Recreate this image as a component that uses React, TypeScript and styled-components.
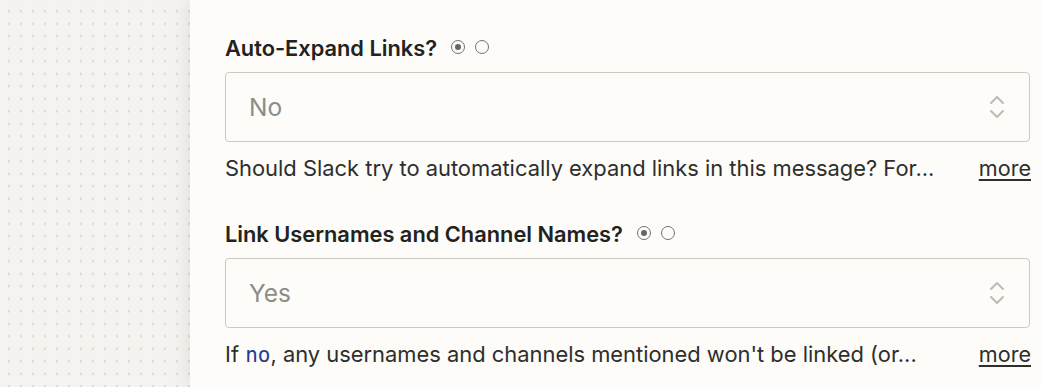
import React from "react";
import styled, { createGlobalStyle } from "styled-components";

const GlobalStyle = createGlobalStyle`
  html, body {
    margin: 0;
    padding: 0;
    height: 100%;
    overflow: hidden;
  }
  body {
    font-family: Inter, "Noto Sans", "Liberation Sans", sans-serif;
    background: #f4f3f0;
  }
`;

const Page = styled.div`
  display: flex;
  width: 1041px;
  height: 387px;
  overflow: hidden;
`;

const Canvas = styled.div`
  width: 190px;
  flex-shrink: 0;
  background-color: #f4f3f0;
  background-image: radial-gradient(circle, #d9d7d2 1px, transparent 1.2px);
  background-size: 12px 12.5px;
  background-position: 3px 5px;
`;

const Panel = styled.div`
  flex: 1;
  background: #fdfcf8;
  box-shadow: -6px 0 14px rgba(0, 0, 0, 0.06);
  padding: 34px 11px 0 35px;
  display: flex;
  flex-direction: column;
  gap: 38px;
`;

const Field = styled.div`
  display: flex;
  flex-direction: column;
`;

const LabelRow = styled.div`
  display: flex;
  align-items: center;
  gap: 14px;
  height: 28px;
  margin-bottom: 10px;
`;

const Label = styled.span`
  font-size: 21.8px;
  font-weight: 600;
  color: #222221;
`;

const Radios = styled.span`
  display: flex;
  align-items: center;
  gap: 10px;
  margin-top: -2px;
`;

const Radio = styled.span<{ $on?: boolean }>`
  width: 14px;
  height: 14px;
  border-radius: 50%;
  border: 1.5px solid #737270;
  box-sizing: border-box;
  display: flex;
  align-items: center;
  justify-content: center;
  &::after {
    content: "";
    width: 6px;
    height: 6px;
    border-radius: 50%;
    background: ${(p) => (p.$on ? "#666563" : "transparent")};
  }
`;

const Select = styled.div`
  height: 70px;
  box-sizing: border-box;
  border: 1px solid #cbc9c4;
  border-radius: 4px;
  background: #fdfcf8;
  display: flex;
  align-items: center;
  justify-content: space-between;
  padding: 0 24px 0 23px;
`;

const Value = styled.span`
  font-size: 24.5px;
  color: #8d8c8a;
`;

const Help = styled.div`
  display: flex;
  align-items: center;
  justify-content: space-between;
  margin-top: 12px;
  height: 28px;
`;

const HelpText = styled.span`
  font-size: 21.9px;
  color: #2e2e2d;
  white-space: nowrap;
`;

const Code = styled.code`
  font-family: "DejaVu Sans Mono", "Liberation Mono", monospace;
  font-size: 21px;
  color: #283a8e;
`;

const More = styled.a`
  font-size: 21.6px;
  color: #2e2e2d;
  text-decoration: underline;
  text-decoration-thickness: 1.5px;
  text-underline-offset: 3px;
  margin-right: -1px;
`;

function Chevrons() {
  return (
    <svg width="16" height="26" viewBox="0 0 16 26" fill="none">
      <path
        d="M2 9 L8 3 L14 9"
        stroke="#bdbbb7"
        strokeWidth="2"
        strokeLinecap="round"
        strokeLinejoin="round"
      />
      <path
        d="M2 17 L8 23 L14 17"
        stroke="#bdbbb7"
        strokeWidth="2"
        strokeLinecap="round"
        strokeLinejoin="round"
      />
    </svg>
  );
}

const fields = [
  {
    label: "Auto-Expand Links?",
    value: "No",
    help: (
      <>Should Slack try to automatically expand links in this message? For...</>
    ),
  },
  {
    label: "Link Usernames and Channel Names?",
    value: "Yes",
    help: (
      <>
        If <Code>no</Code>, any usernames and channels mentioned won't be linked
        (or...
      </>
    ),
  },
];

export default function App() {
  return (
    <>
      <GlobalStyle />
      <Page>
        <Canvas />
        <Panel>
          {fields.map((f) => (
            <Field key={f.label}>
              <LabelRow>
                <Label>{f.label}</Label>
                <Radios>
                  <Radio $on />
                  <Radio />
                </Radios>
              </LabelRow>
              <Select>
                <Value>{f.value}</Value>
                <Chevrons />
              </Select>
              <Help>
                <HelpText>{f.help}</HelpText>
                <More>more</More>
              </Help>
            </Field>
          ))}
        </Panel>
      </Page>
    </>
  );
}
